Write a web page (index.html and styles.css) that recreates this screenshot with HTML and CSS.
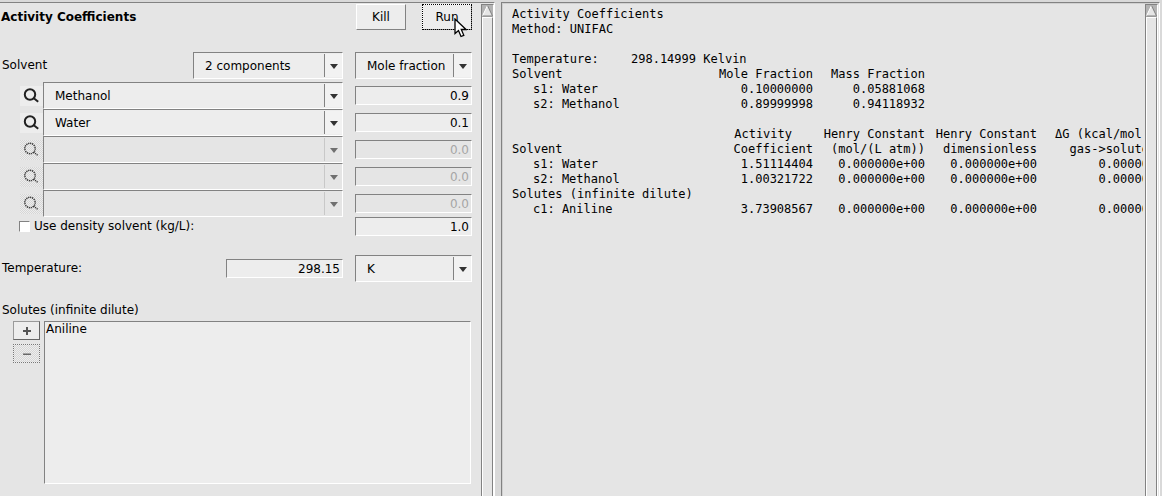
FILE: index.html
```html
<!DOCTYPE html>
<html lang="en">

<head>
    <meta charset="UTF-8">
    <meta name="viewport" content="width=device-width, initial-scale=1.0">
    <title>Activity Coefficients</title>
    <link rel="stylesheet" href="styles.css">
</head>

<body>
    <div class="window">
        <div class="pane input-pane">
            <form class="form" id="activityForm">
                <div class="row header">
                    <h1>Activity Coefficients</h1>
                    <button type="button" class="btn" id="kill">Kill</button>
                    <button type="button" class="btn focused" id="run"><span>Run</span>
                        <svg class="cursor" width="13" height="20" viewBox="0 0 13 20" aria-hidden="true">
                            <path d="M1 1V15.500L4.500 12.500L7 18.500L9.800 17.300L7.300 11.500H12Z" fill="#fff" stroke="#000" stroke-width="1.300"/>
                        </svg>
                    </button>
                </div>

                <div class="row solvent">
                    <label for="components">Solvent</label>
                    <div class="combo count">
                        <select id="components">
                            <option>2 components</option>
                        </select>
                    </div>
                    <div class="combo value">
                        <select id="fraction" aria-label="Fraction type">
                            <option>Mole fraction</option>
                        </select>
                    </div>
                </div>

                <div class="row component">
                    <button type="button" class="search" aria-label="Search solvent 1"><svg width="16" height="16" viewBox="0 0 16 16"><circle cx="7" cy="6.500" r="5.200"/><path d="M10.500 10L15.200 13.700"/></svg></button>
                    <div class="combo name"><select aria-label="Solvent 1"><option>Methanol</option></select></div>
                    <input type="text" class="value" aria-label="Fraction 1" value="0.9">
                </div>
                <div class="row component">
                    <button type="button" class="search" aria-label="Search solvent 2"><svg width="16" height="16" viewBox="0 0 16 16"><circle cx="7" cy="6.500" r="5.200"/><path d="M10.500 10L15.200 13.700"/></svg></button>
                    <div class="combo name"><select aria-label="Solvent 2"><option>Water</option></select></div>
                    <input type="text" class="value" aria-label="Fraction 2" value="0.1">
                </div>
                <div class="row component">
                    <button type="button" class="search" aria-label="Search solvent 3" disabled><svg width="16" height="16" viewBox="0 0 16 16"><circle cx="7" cy="6.500" r="5.200"/><path d="M10.500 10L15.200 13.700"/></svg></button>
                    <div class="combo name off"><select aria-label="Solvent 3" disabled><option></option></select></div>
                    <input type="text" class="value" aria-label="Fraction 3" value="0.0" disabled>
                </div>
                <div class="row component">
                    <button type="button" class="search" aria-label="Search solvent 4" disabled><svg width="16" height="16" viewBox="0 0 16 16"><circle cx="7" cy="6.500" r="5.200"/><path d="M10.500 10L15.200 13.700"/></svg></button>
                    <div class="combo name off"><select aria-label="Solvent 4" disabled><option></option></select></div>
                    <input type="text" class="value" aria-label="Fraction 4" value="0.0" disabled>
                </div>
                <div class="row component">
                    <button type="button" class="search" aria-label="Search solvent 5" disabled><svg width="16" height="16" viewBox="0 0 16 16"><circle cx="7" cy="6.500" r="5.200"/><path d="M10.500 10L15.200 13.700"/></svg></button>
                    <div class="combo name off"><select aria-label="Solvent 5" disabled><option></option></select></div>
                    <input type="text" class="value" aria-label="Fraction 5" value="0.0" disabled>
                </div>

                <div class="row density">
                    <input type="checkbox" id="useDensity">
                    <label for="useDensity">Use density solvent (kg/L):</label>
                    <input type="text" class="value" aria-label="Density" value="1.0">
                </div>

                <div class="row temperature">
                    <label for="temperature">Temperature:</label>
                    <input type="text" class="value" id="temperature" value="298.15">
                    <div class="combo value">
                        <select aria-label="Temperature unit"><option>K</option></select>
                    </div>
                </div>

                <label class="caption" for="solutes">Solutes (infinite dilute)</label>
                <div class="solutes">
                    <div class="tools">
                        <button type="button" aria-label="Add solute"><svg width="8" height="8" viewBox="0 0 8 8"><path d="M4 0V8M0 4H8"/></svg></button>
                        <button type="button" aria-label="Remove solute" disabled><svg width="8" height="8" viewBox="0 0 8 8"><path d="M0 5L1 3.500L2 5L3 3.500L4 5L5 3.500L6 5L7 3.500L8 5"/></svg></button>
                    </div>
                    <select id="solutes" size="9">
                        <option>Aniline</option>
                    </select>
                </div>
            </form>
            <div class="scrollbar"><svg width="11" height="12" viewBox="0 0 11 12" aria-hidden="true"><path d="M5.500 0.500L10.500 11H0.500Z" fill="#e5e5e5"/><path d="M5.500 0.500L0.500 11" stroke="#fff"/><path d="M5.500 0.500L10.500 11H0.500" fill="none" stroke="#828282"/></svg><div class="thumb"></div></div>
        </div>

        <div class="pane output-pane">
            <div class="report">
                <div>Activity Coefficients</div>
                <div>Method: UNIFAC</div>
                <div class="condition"><span>Temperature:</span><span>298.14999 Kelvin</span></div>

                <table>
                    <colgroup><col class="label-col"><col><col></colgroup>
                    <tr><th>Solvent</th><th>Mole Fraction</th><th>Mass Fraction</th></tr>
                    <tr><td>s1: Water</td><td>0.10000000</td><td>0.05881068</td></tr>
                    <tr><td>s2: Methanol</td><td>0.89999998</td><td>0.94118932</td></tr>
                </table>

                <table>
                    <colgroup><col class="label-col"><col><col><col><col></colgroup>
                    <tr><th></th><th class="short">Activity</th><th>Henry Constant</th><th>Henry Constant</th><th>ΔG (kcal/mol)</th></tr>
                    <tr><th>Solvent</th><th>Coefficient</th><th>(mol/(L atm))</th><th>dimensionless</th><th>gas-&gt;solute</th></tr>
                    <tr><td>s1: Water</td><td>1.51114404</td><td>0.000000e+00</td><td>0.000000e+00</td><td>0.00000</td></tr>
                    <tr><td>s2: Methanol</td><td>1.00321722</td><td>0.000000e+00</td><td>0.000000e+00</td><td>0.00000</td></tr>
                    <tr><th colspan="5">Solutes (infinite dilute)</th></tr>
                    <tr><td>c1: Aniline</td><td>3.73908567</td><td>0.000000e+00</td><td>0.000000e+00</td><td>0.00000</td></tr>
                </table>
            </div>
            <div class="scrollbar"><svg width="11" height="12" viewBox="0 0 11 12" aria-hidden="true"><path d="M5.500 0.500L10.500 11H0.500Z" fill="#e5e5e5"/><path d="M5.500 0.500L0.500 11" stroke="#fff"/><path d="M5.500 0.500L10.500 11H0.500" fill="none" stroke="#828282"/></svg><div class="thumb"></div></div>
        </div>
    </div>
</body>

</html>
```
FILE: styles.css
```css
* {
    box-sizing: border-box;
}

body {
    margin: 0;
    background-color: #d9d9d9;
    color: #000;
    font: 12px/15px "DejaVu Sans", sans-serif;
}

.window {
    display: flex;
    gap: 6px;
    height: 100vh;
    padding: 2px 2px 0 0;
    overflow: hidden;
}

.pane {
    display: flex;
    background-color: #e5e5e5;
    border-top: 1px solid #828282;
    border-right: 1px solid #fff;
}

.input-pane {
    flex: 0 0 495px;
}

.output-pane {
    flex: 1;
    min-width: 0;
    border-left: 1px solid #828282;
    box-shadow: inset 1px 1px #d0d0d0;
}

.form {
    flex: 1;
    padding: 1px 9px 0 0;
}

.row {
    display: flex;
    align-items: center;
    gap: 12px;
}

.row label,
.header h1,
.caption {
    padding-left: 2px;
}

.header {
    gap: 16px;
}

.header h1 {
    flex: 1;
    margin: 0;
    padding-left: 1px;
    font-size: 12px;
}

button,
select,
input {
    margin: 0;
    border: 1px solid;
    border-radius: 0;
    background-color: #ededed;
    color: #000;
    font: inherit;
}

.btn {
    position: relative;
    width: 50px;
    height: 26px;
    padding: 0;
    border-color: #fff #828282 #828282 #fff;
}

.btn.focused {
    outline: 1px dotted #000;
    outline-offset: -1px;
}

.cursor {
    position: absolute;
    left: 31px;
    top: 13px;
}

.solvent {
    margin-top: 22px;
    margin-bottom: 3px;
}

.solvent label,
.density label,
.temperature label {
    flex: 1;
}

.combo {
    position: relative;
    height: 27px;
    border: 1px solid;
    border-color: #828282 #fff #fff #828282;
}

.combo select {
    display: block;
    width: 100%;
    height: 25px;
    padding: 1px 20px 0 11px;
    border: none;
    appearance: none;
}

/* arrow box and arrow */
.combo::before {
    content: "";
    position: absolute;
    top: 1px;
    right: 0;
    bottom: 1px;
    width: 17px;
    border-left: 1px solid #828282;
    background-color: #f2f2f2;
    pointer-events: none;
}

.combo::after {
    content: "";
    position: absolute;
    top: 11px;
    right: 4px;
    border: 4px solid transparent;
    border-top: 5px solid #333;
    border-bottom: none;
    pointer-events: none;
}

.combo.off select,
.combo.off::before {
    background-color: #e5e5e5;
}

.combo.off::after {
    border-top-color: #707070;
}

.count {
    width: 150px;
}

.value {
    width: 117px;
}

.name {
    flex: 1;
}

input[type="text"] {
    height: 19px;
    padding: 0 2px;
    border-color: #828282 #fff #fff #828282;
    text-align: right;
}

input[type="text"]:disabled {
    background-color: #e5e5e5;
    color: #a6a6a6;
}

.search {
    width: 23px;
    height: 20px;
    margin: 0 -12px 0 20px;
    padding: 2px 3px;
    border: none;
}

.search svg {
    display: block;
    fill: none;
    stroke: #222;
    stroke-width: 2;
}

.search:disabled,
.tools button:disabled {
    background: repeating-conic-gradient(#ededed 0 25%, #d6d6d6 0 50%) 0 0 / 2px 2px;
}

.search:disabled svg {
    stroke-width: 1.5;
    stroke: #333;
    stroke-dasharray: 1.2 0.8;
}

.density {
    gap: 4px;
}

.density input[type="checkbox"] {
    appearance: none;
    width: 11px;
    height: 11px;
    margin-left: 19px;
    border-color: #828282 #fff #fff #828282;
    background-color: #fff;
}

.density label {
    padding: 0;
}

.temperature {
    margin-top: 19px;
}

.caption {
    display: block;
    margin: 21px 0 3px;
}

.solutes {
    display: flex;
    gap: 4px;
    padding: 0 1px 0 13px;
}

.tools {
    display: flex;
    flex-direction: column;
    gap: 4px;
}

.tools button {
    display: flex;
    align-items: center;
    justify-content: center;
    width: 27px;
    height: 19px;
    padding: 0;
    border-color: #9a9a9a #666 #666 #9a9a9a;
}

.tools button:disabled {
    border: 1px dotted #777;
}

.tools svg {
    fill: none;
    stroke: #555;
    stroke-width: 2;
}

.tools button:disabled svg {
    stroke-width: 1;
}

#solutes {
    flex: 1;
    height: 163px;
    padding: 0;
    border-color: #828282 #fff #fff #828282;
    overflow: hidden;
}

#solutes option {
    min-height: 0;
    padding: 0 1px;
}

.scrollbar {
    display: flex;
    flex-direction: column;
    flex: 0 0 13px;
    margin: 1px 0 0;
    background-color: #b3b3b3;
    border-left: 1px solid #828282;
    border-top: 1px solid #828282;
    border-right: 1px solid #fff;
}

.scrollbar svg {
    flex: none;
}

.thumb {
    flex: 1;
    background-color: #e5e5e5;
    border-top: 1px solid #fff;
    border-left: 1px solid #fff;
    border-right: 1px solid #828282;
}

.output-pane .scrollbar {
    margin-right: 1px;
}

.report {
    flex: 1;
    min-width: 0;
    margin: 0 2px 0 10px;
    padding-top: 4px;
    overflow: hidden;
    font: 12px/15px "DejaVu Sans Mono", monospace;
    white-space: nowrap;
}

.condition {
    display: flex;
    margin-top: 15px;
}

.condition span:first-child {
    width: 119px;
}

.report table {
    table-layout: fixed;
    width: 0;
    margin-bottom: 15px;
    border-collapse: collapse;
}

.report col {
    width: 112px;
}

.report .label-col {
    width: 189px;
}

.report th,
.report td {
    height: 15px;
    padding: 0;
    font-weight: normal;
    text-align: right;
}

.report th:first-child {
    text-align: left;
}

.report td:first-child {
    padding-left: 21px;
    text-align: left;
}

.report th.short {
    padding-right: 21px;
}
```
